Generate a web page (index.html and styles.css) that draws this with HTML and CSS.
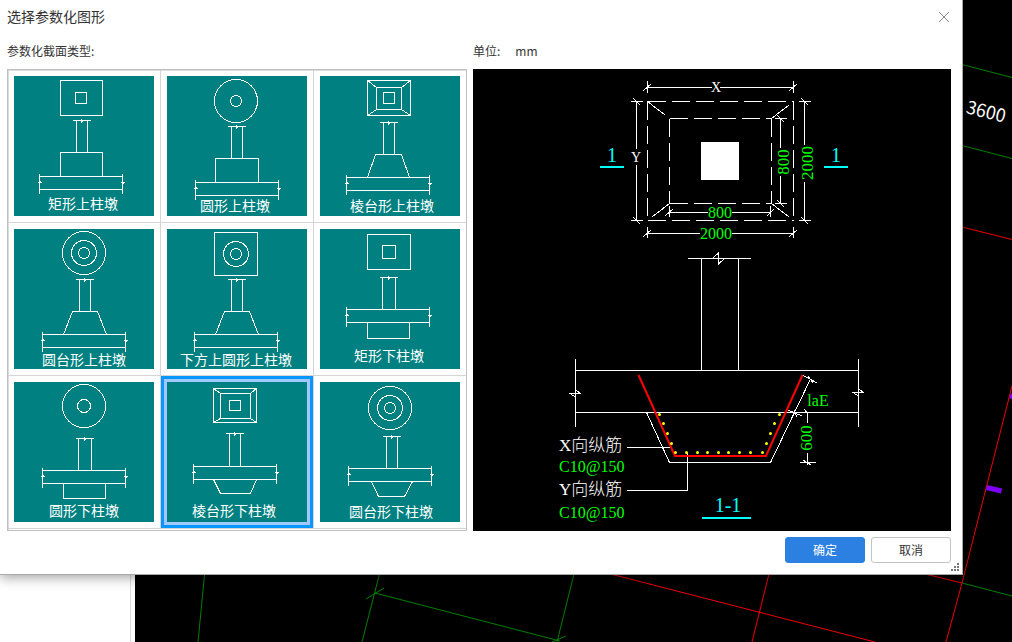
FILE: index.html
```html
<!DOCTYPE html>
<html lang="zh-CN">
<head>
    <meta charset="UTF-8">
    <meta name="viewport" content="width=device-width, initial-scale=1.0">
    <title>选择参数化图形</title>
    <link rel="stylesheet" href="styles.css">
</head>
<body>
    <!-- Shared shapes for the thumbnails -->
    <svg class="shapes" width="0" height="0" aria-hidden="true">
        <symbol id="post" overflow="visible">
            <path d="M-4 0H14M0 0V32M11 0V32M5 -2v4M4 0v-1M6 0v1"/>
        </symbol>
        <symbol id="post-wide" overflow="visible">
            <path d="M-3 0H15M0 0V32M13 0V32M6 -2v4M5 0v-1M7 0v1"/>
        </symbol>
        <symbol id="beam" overflow="visible">
            <path d="M0 0H83M0 13H83M0 -3V17M83 -3V17M-2 6H2M81 6H85M0 5h1M83 7h1"/>
        </symbol>
    </svg>

    <main class="workspace">
        <div class="side-panel"></div>
        <svg class="canvas" viewBox="135 0 877 642" preserveAspectRatio="xMinYMin slice">
            <g class="axis-green">
                <path d="M960 64L1012 77.500M960 145L1012 158.500"/>
                <path d="M962 583L1012 596"/>
                <path d="M205 570L198 642"/>
                <path d="M380.500 570L362 642M366 599L384 588M375 593L560 641M552 642L566 636"/>
                <path d="M575 570L557 642"/>
            </g>
            <g class="axis-red">
                <path d="M960 226.500L1012 239.500"/>
                <path d="M1012 386L962 583L946 642"/>
                <path d="M905 569L962 583"/>
                <path d="M595 570L875 642M770 570L752 642"/>
            </g>
            <path class="axis-mark" d="M986.500 487.500L1001.500 491M1010 396L1014 397"/>
            <text class="axis-text" x="986" y="118" transform="rotate(14 986 112)">3600</text>
        </svg>
    </main>

    <form class="dialog" role="dialog" aria-labelledby="dialogTitle">
        <header class="dialog-header">
            <h1 id="dialogTitle">选择参数化图形</h1>
            <button type="button" class="close" aria-label="关闭">
                <svg width="12" height="12" viewBox="0 0 12 12"><path d="M1 1L11 11M11 1L1 11"/></svg>
            </button>
        </header>

        <div class="dialog-body">
            <section>
                <p class="caption" id="typeLabel">参数化截面类型:</p>
                <div class="shape-list" role="radiogroup" aria-labelledby="typeLabel">
                    <label class="shape">
                        <input type="radio" name="shape" value="1">
                        <svg class="thumb" viewBox="0 0 140 140">
                            <rect x="46.500" y="4.500" width="42" height="35"/>
                            <rect x="61.500" y="16.500" width="11" height="11"/>
                            <use href="#post" x="62.500" y="44.500"/>
                            <path d="M46.500 100.500V76.500H88.500V100.500"/>
                            <use href="#beam" x="25.500" y="100.500"/>
                            <text x="34" y="133">矩形上柱墩</text>
                        </svg>
                    </label>
                    <label class="shape">
                        <input type="radio" name="shape" value="2">
                        <svg class="thumb" viewBox="0 0 140 140">
                            <circle cx="69" cy="25" r="21.500"/>
                            <circle cx="69" cy="25" r="5.500"/>
                            <use href="#post" x="64.500" y="50.500"/>
                            <path d="M48.500 106.500V82.500H91.500V106.500"/>
                            <use href="#beam" x="28.500" y="106.500"/>
                            <text x="33" y="135">圆形上柱墩</text>
                        </svg>
                    </label>
                    <label class="shape">
                        <input type="radio" name="shape" value="3">
                        <svg class="thumb" viewBox="0 0 140 140">
                            <rect x="47.500" y="4.500" width="43" height="35"/>
                            <rect x="56.500" y="11.500" width="25" height="22"/>
                            <rect x="63.500" y="16.500" width="11" height="11"/>
                            <path d="M47.500 4.500L56.500 11.500M90.500 4.500L81.500 11.500M47.500 39.500L56.500 33.500M90.500 39.500L81.500 33.500"/>
                            <use href="#post" x="63.500" y="46.500"/>
                            <path d="M47.500 101.500L55.500 78.500H81.500L89.500 101.500"/>
                            <use href="#beam" x="26.500" y="101.500"/>
                            <text x="30" y="135">棱台形上柱墩</text>
                        </svg>
                    </label>
                    <label class="shape">
                        <input type="radio" name="shape" value="4">
                        <svg class="thumb" viewBox="0 0 140 140">
                            <circle cx="70" cy="24" r="21.500"/>
                            <circle cx="70" cy="24" r="12.500"/>
                            <circle cx="70" cy="24" r="5.500"/>
                            <use href="#post" x="65.500" y="50.500"/>
                            <path d="M49.500 105.500L58.500 82.500H83.500L92.500 105.500"/>
                            <use href="#beam" x="28.500" y="105.500"/>
                            <text x="28" y="136">圆台形上柱墩</text>
                        </svg>
                    </label>
                    <label class="shape">
                        <input type="radio" name="shape" value="5">
                        <svg class="thumb" viewBox="0 0 140 140">
                            <rect x="47.500" y="3.500" width="43" height="43"/>
                            <circle cx="69" cy="25" r="12.500"/>
                            <circle cx="69" cy="25" r="5.500"/>
                            <use href="#post" x="64.500" y="50.500"/>
                            <path d="M48.500 105.500L57.500 82.500H82.500L91.500 105.500"/>
                            <use href="#beam" x="27.500" y="105.500"/>
                            <text x="13" y="136">下方上圆形上柱墩</text>
                        </svg>
                    </label>
                    <label class="shape">
                        <input type="radio" name="shape" value="6">
                        <svg class="thumb" viewBox="0 0 140 140">
                            <rect x="47.500" y="5.500" width="43" height="35"/>
                            <rect x="62.500" y="16.500" width="13" height="13"/>
                            <use href="#post-wide" x="62.500" y="48.500"/>
                            <use href="#beam" x="26.500" y="80.500"/>
                            <path d="M47.500 93.500V109.500H89.500V93.500"/>
                            <text x="34" y="132">矩形下柱墩</text>
                        </svg>
                    </label>
                    <label class="shape">
                        <input type="radio" name="shape" value="7">
                        <svg class="thumb" viewBox="0 0 140 140">
                            <circle cx="70" cy="24" r="21.500"/>
                            <circle cx="70" cy="24" r="6.500"/>
                            <use href="#post-wide" x="64.500" y="56.500"/>
                            <use href="#beam" x="28.500" y="88.500"/>
                            <path d="M49.500 101.500V116.500H91.500V101.500"/>
                            <text x="35" y="134">圆形下柱墩</text>
                        </svg>
                    </label>
                    <label class="shape">
                        <input type="radio" name="shape" value="8" checked>
                        <svg class="thumb" viewBox="0 0 140 140">
                            <rect x="46.500" y="6.500" width="43" height="34"/>
                            <rect x="53.500" y="11.500" width="30" height="25"/>
                            <rect x="62.500" y="18.500" width="11" height="10"/>
                            <path d="M46.500 6.500L53.500 11.500M89.500 6.500L83.500 11.500M46.500 40.500L53.500 36.500M89.500 40.500L83.500 36.500"/>
                            <use href="#post" x="62.500" y="51.500"/>
                            <use href="#beam" x="26.500" y="84.500"/>
                            <path d="M46.500 97.500L53.500 111.500H83.500L89.500 97.500"/>
                            <text x="25" y="134">棱台形下柱墩</text>
                        </svg>
                    </label>
                    <label class="shape">
                        <input type="radio" name="shape" value="9">
                        <svg class="thumb" viewBox="0 0 140 140">
                            <circle cx="70" cy="26" r="21.500"/>
                            <circle cx="70" cy="26" r="12.500"/>
                            <circle cx="70" cy="26" r="5.500"/>
                            <use href="#post" x="66.500" y="54.500"/>
                            <use href="#beam" x="28.500" y="86.500"/>
                            <path d="M51.500 99.500L58.500 114.500H84.500L92.500 99.500"/>
                            <text x="29" y="135">圆台形下柱墩</text>
                        </svg>
                    </label>
                </div>
            </section>

            <section>
                <p class="caption"><span>单位:</span><span class="unit">mm</span></p>
                <svg class="preview" viewBox="0 0 478 462">
                    <!-- plan view -->
                    <g class="line">
                        <path class="dashed" d="M174.500 32.500H320.500M174.500 151.500H320.500M174.500 32.500V151.500M320.500 32.500V151.500"/>
                        <path class="dashed" d="M196.500 49.500H298.500M196.500 134.500H298.500M196.500 49.500V134.500M298.500 49.500V134.500"/>
                        <path d="M174.500 32.500L192 46M298.500 49.500L316 36M179 148L196.500 134.500M298.500 134.500L316 148"/>
                        <!-- X -->
                        <path d="M174.500 18.500H239M247 18.500H320.500M174.500 12V24M320.500 12V24M170 22L178 15M316 22L324 15"/>
                        <!-- Y -->
                        <path d="M163.500 32.500V80M163.500 96V151.500M158 32.500H170M158 151.500H170M160 29L167 36M160 148L167 155"/>
                        <!-- 800 / 2000, right side -->
                        <path d="M307.500 49.500V79M307.500 107V134.500M302 49.500H314M302 134.500H314M304 46L311 53M304 131L311 138"/>
                        <path d="M331.500 32.500V76M331.500 113V151.500M326 32.500H338M326 151.500H338M328 29L335 36M328 148L335 155"/>
                        <!-- 800 / 2000, bottom -->
                        <path d="M196.500 143.500H235M259 143.500H297.500M196.500 137V148M297.500 137V148M192 147L200 140M294 147L301 140"/>
                        <path d="M174.500 164.500H227M259 164.500H320.500M174.500 158V169M320.500 158V169M170 168L178 161M316 168L324 161"/>
                    </g>
                    <rect class="column" x="228" y="73" width="38" height="38"/>
                    <text class="axis" x="243" y="23">X</text>
                    <text class="axis" x="163" y="93">Y</text>
                    <text class="dim" x="247" y="149">800</text>
                    <text class="dim" x="243" y="170">2000</text>
                    <text class="dim dim-side" transform="translate(316 93) rotate(-90)">800</text>
                    <text class="dim dim-side" transform="translate(340 94) rotate(-90)">2000</text>
                    <text class="mark" x="139" y="93">1</text>
                    <text class="mark" x="363" y="93">1</text>
                    <path class="mark-line" d="M127 98H151M351 98H375"/>

                    <!-- section 1-1 -->
                    <g class="line">
                        <path d="M215 189.500H278M228.500 189.500V301.500M265.500 189.500V301.500M240 189L245.500 184V195L251 190"/>
                        <path d="M102.500 301.500H385.500M102.500 343.500H385.500M102.500 290V358M385.500 290V358"/>
                        <path d="M102.500 321L107.500 324.500H97L102.500 328M385.500 320L390.500 323.500H380L385.500 327"/>
                        <path d="M173.500 343.500L196.500 393.500H297.500L337.500 310"/>
                        <path d="M329.500 306L344 314M335 307L340 314M313.500 340.500L329 347M321 341L324 348"/>
                        <path d="M334.500 343.500V354M334.500 384V396M327 393.500H343M331 340L335 345M330 391L338 396"/>
                        <path d="M154 378.500H197M154 421.500H214.500V384"/>
                    </g>
                    <path class="rebar" d="M165.500 306L202 387H293L329.500 306"/>
                    <path class="rebar-dots" d="M186.500 345.500h0M190.500 354.500h0M194.500 364.500h0M198.500 374.500h0M202.500 383.500h0M213.500 383.500h0M224.500 383.500h0M234.500 383.500h0M245.500 383.500h0M255.500 383.500h0M266.500 383.500h0M277.500 383.500h0M289.500 383.500h0M293.500 374.500h0M297.500 364.500h0M301.500 354.500h0M306.500 345.500h0"/>
                    <text class="dim" x="345" y="337">laE</text>
                    <text class="dim dim-side" transform="translate(339 369) rotate(-90)">600</text>
                    <text class="note" x="86" y="382">X向纵筋</text>
                    <text class="value" x="86" y="403">C10@150</text>
                    <text class="note" x="86" y="426">Y向纵筋</text>
                    <text class="value" x="86" y="449">C10@150</text>
                    <text class="mark" x="255" y="443">1-1</text>
                    <path class="mark-line" d="M229 449H278"/>
                </svg>
            </section>
        </div>

        <footer class="dialog-footer">
            <button type="submit" class="btn btn-primary">确定</button>
            <button type="button" class="btn">取消</button>
        </footer>

        <svg class="grip" width="8" height="8" viewBox="0 0 8 8">
            <path d="M6 0h2v2h-2zM3 3h2v2h-2zM6 3h2v2h-2zM0 6h2v2h-2zM3 6h2v2h-2zM6 6h2v2h-2z"/>
        </svg>
    </form>
</body>
</html>
```
FILE: styles.css
```css
* {
    box-sizing: border-box;
}

body {
    margin: 0;
    font-family: "Noto Sans CJK SC", sans-serif;
    font-size: 12px;
    color: #333;
    overflow: hidden;
}

.shapes {
    position: absolute;
}

/* Drawing area behind the dialog */
.workspace {
    display: flex;
    height: 100vh;
    background-color: #fff;
}

.side-panel {
    flex: none;
    width: 131px;
    margin-right: 4px;
    border-right: 1px solid #dcdcdc;
}

.canvas {
    flex: 1;
    min-width: 0;
    height: 100%;
    background-color: #000;
    fill: none;
}

.axis-green {
    stroke: #008000;
}

.axis-red {
    stroke: #f00000;
}

.axis-mark {
    stroke: #8000ff;
    stroke-width: 5px;
}

.axis-text {
    fill: #fff;
    font-size: 18px;
    text-anchor: middle;
}

/* Dialog */
.dialog {
    position: absolute;
    top: 0;
    left: 0;
    right: 49px;
    padding: 0 11px 11px 7px;
    background-color: #fff;
    border-right: 1px solid #aaa;
    border-bottom: 1px solid #aaa;
    box-shadow: 0 2px 12px rgba(0, 0, 0, 0.4);
}

.dialog-header {
    display: flex;
    justify-content: space-between;
    align-items: center;
    height: 32px;
}

.dialog-header h1 {
    margin: 0;
    font-size: 14px;
    font-weight: normal;
}

.close {
    display: flex;
    padding: 1px 1px 0 0;
    border: none;
    background: none;
    cursor: pointer;
}

.close path {
    stroke: #888;
    stroke-width: 1px;
}

.dialog-body {
    display: grid;
    grid-template-columns: max-content 1fr;
    gap: 6px;
}

.caption {
    display: flex;
    align-items: center;
    gap: 15px;
    height: 37px;
    margin: 0;
}

/* Shape list */
.shape-list {
    display: grid;
    grid-template-columns: repeat(3, max-content);
    padding-bottom: 1px;
    border: 1px solid #c0c0c0;
    box-shadow: inset 1px 1px #dcdcdc;
}

.shape {
    position: relative;
    padding: 6px;
    border-right: 1px solid #d5d5d5;
    border-bottom: 1px solid #d5d5d5;
    cursor: pointer;
}

.shape:nth-child(3n) {
    border-right: none;
}

.shape input {
    position: absolute;
    inset: 0;
    margin: 0;
    appearance: none;
}

.shape input:checked {
    border: 3px solid #0a96ff;
    background-color: #a0c8ff;
}

.thumb {
    position: relative;
    display: block;
    width: 140px;
    height: 140px;
    background-color: #008080;
    fill: none;
    stroke: #fff;
    shape-rendering: crispEdges;
}

.thumb text {
    fill: #fff;
    stroke: none;
    font-size: 14px;
}

/* Preview */
.preview {
    display: block;
    width: 100%;
    background-color: #000;
    font-family: "Liberation Serif", "Noto Sans CJK SC", serif;
    font-size: 16px;
}

.line {
    fill: none;
    stroke: #fff;
    shape-rendering: crispEdges;
}

.dashed {
    stroke-dasharray: 18 6;
}

.column {
    fill: #fff;
}

.axis,
.dim,
.mark {
    text-anchor: middle;
}

.axis,
.note {
    fill: #fff;
}

.axis {
    font-size: 14px;
}

.dim,
.value {
    fill: #00ff00;
}

.dim-side {
    font-size: 17px;
}

.note {
    font-size: 17px;
    font-weight: 300;
}

.mark {
    fill: #00ffff;
    font-size: 20px;
}

.mark-line {
    stroke: #00ffff;
    stroke-width: 2px;
}

.rebar {
    fill: none;
    stroke: #ff0000;
    stroke-width: 2px;
}

.rebar-dots {
    stroke: #ffff00;
    stroke-width: 3px;
    stroke-linecap: round;
}

/* Buttons */
.dialog-footer {
    display: flex;
    justify-content: flex-end;
    gap: 6px;
    margin-top: 6px;
}

.btn {
    width: 80px;
    height: 26px;
    padding: 0 0 1px;
    border: 1px solid #c4c4c4;
    border-radius: 3px;
    background-color: #fff;
    color: #333;
    font-family: inherit;
    font-size: 12px;
    cursor: pointer;
}

.btn-primary {
    border-color: #2c80e2;
    background-color: #2c80e2;
    color: #fff;
}

.grip {
    position: absolute;
    right: 3px;
    bottom: 3px;
    fill: #777;
}
```
